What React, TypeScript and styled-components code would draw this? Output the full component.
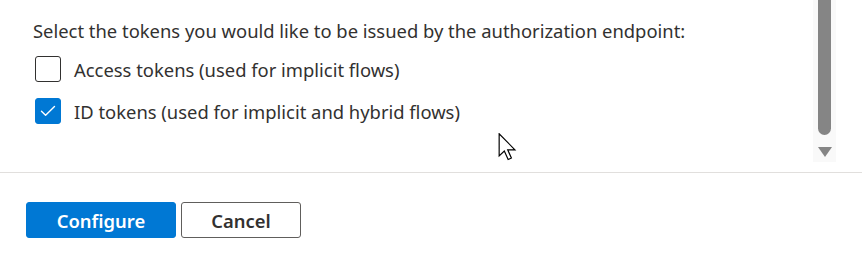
import React from 'react';
import styled, { createGlobalStyle } from 'styled-components';

const GlobalStyle = createGlobalStyle`
  html, body {
    margin: 0;
    padding: 0;
    background: #ffffff;
  }
  body {
    font-family: "Noto Sans", "Open Sans", sans-serif;
    color: #323130;
  }
`;

const Page = styled.div`
  position: relative;
  width: 862px;
  height: 266px;
  overflow: hidden;
  background: #ffffff;
`;

const Panel = styled.div`
  display: flex;
  height: 172px;
  border-bottom: 1px solid #e1dfdd;
`;

const Body = styled.div`
  flex: 1;
  padding: 17px 0 0 33px;
`;

const Intro = styled.p`
  margin: 0 0 3px;
  font-size: 18.4px;
  line-height: 28px;
`;

const Row = styled.label`
  display: flex;
  align-items: center;
  gap: 13px;
  height: 42px;
  font-size: 18.4px;
  cursor: default;
`;

const Box = styled.span<{ $checked?: boolean }>`
  display: flex;
  align-items: center;
  justify-content: center;
  box-sizing: border-box;
  width: 26px;
  height: 26px;
  margin-left: 2px;
  border-radius: 3px;
  border: 1px solid ${({ $checked }) => ($checked ? '#0078d4' : '#323130')};
  background: ${({ $checked }) => ($checked ? '#0078d4' : '#ffffff')};
`;

const Track = styled.div`
  width: 23px;
  margin-right: 26px;
  height: 162px;
  background: #f9f9f9;
  display: flex;
  flex-direction: column;
  align-items: center;
`;

const Thumb = styled.div`
  width: 13px;
  height: 135px;
  background: #858585;
  border-radius: 0 0 7px 7px;
`;

const Arrow = styled.div`
  margin-top: 12px;
  width: 0;
  height: 0;
  border-left: 7.5px solid transparent;
  border-right: 7.5px solid transparent;
  border-top: 10px solid #858585;
`;

const Footer = styled.div`
  display: flex;
  gap: 5px;
  padding: 29px 0 0 26px;
`;

const Button = styled.button<{ $primary?: boolean }>`
  box-sizing: border-box;
  height: 36px;
  width: ${({ $primary }) => ($primary ? '150px' : '120px')};
  border-radius: 3px;
  font-family: "Noto Sans", "Open Sans", sans-serif;
  font-size: 18.4px;
  font-weight: 600;
  padding: 0;
  color: ${({ $primary }) => ($primary ? '#ffffff' : '#323130')};
  background: ${({ $primary }) => ($primary ? '#0078d4' : '#ffffff')};
  border: 1px solid ${({ $primary }) => ($primary ? '#0078d4' : '#605e5c')};
`;

const Pointer = styled.svg`
  position: absolute;
  left: 498px;
  top: 133px;
`;

const Check = () => (
  <svg width="16" height="12" viewBox="0 0 16 12">
    <polyline
      points="1.5,6.2 5.6,10.2 14.5,1.5"
      fill="none"
      stroke="#ffffff"
      strokeWidth="1.4"
      strokeLinecap="round"
      strokeLinejoin="round"
    />
  </svg>
);

export default function App() {
  return (
    <Page>
      <GlobalStyle />
      <Panel>
        <Body>
          <Intro>
            Select the tokens you would like to be issued by the authorization
            endpoint:
          </Intro>
          <Row>
            <Box />
            Access tokens (used for implicit flows)
          </Row>
          <Row>
            <Box $checked>
              <Check />
            </Box>
            ID tokens (used for implicit and hybrid flows)
          </Row>
        </Body>
        <Track>
          <Thumb />
          <Arrow />
        </Track>
      </Panel>
      <Footer>
        <Button $primary>Configure</Button>
        <Button>Cancel</Button>
      </Footer>
      <Pointer width="20" height="28" viewBox="0 0 13 19">
        <path
          d="M0.5 0.5 L0.5 15.5 L4 12.2 L6.6 18 L8.8 17 L6.3 11.4 L11.2 11.4 Z"
          fill="#ffffff"
          stroke="#000000"
          strokeWidth="0.8"
          strokeLinejoin="miter"
        />
      </Pointer>
    </Page>
  );
}
